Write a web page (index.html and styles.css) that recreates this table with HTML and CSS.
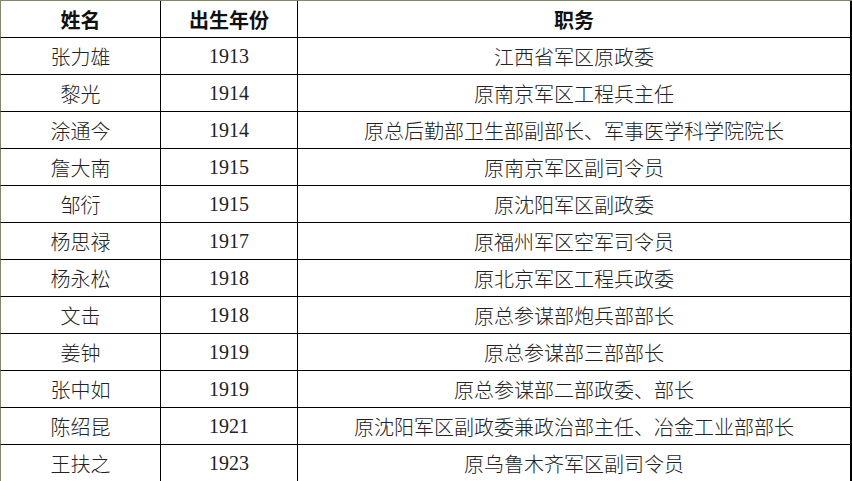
FILE: index.html
```html
<!DOCTYPE html>
<html lang="zh-CN">
<head>
<meta charset="utf-8">
<title>名单</title>
<link rel="stylesheet" href="styles.css">
</head>
<body>
<div class="table">
  <div class="cell head">姓名</div><div class="cell head">出生年份</div><div class="cell head wide">职务</div>
  <div class="cell">张力雄</div><div class="cell num">1913</div><div class="cell wide">江西省军区原政委</div>
  <div class="cell">黎光</div><div class="cell num">1914</div><div class="cell wide">原南京军区工程兵主任</div>
  <div class="cell">涂通今</div><div class="cell num">1914</div><div class="cell wide">原总后勤部卫生部副部长、军事医学科学院院长</div>
  <div class="cell">詹大南</div><div class="cell num">1915</div><div class="cell wide">原南京军区副司令员</div>
  <div class="cell">邹衍</div><div class="cell num">1915</div><div class="cell wide">原沈阳军区副政委</div>
  <div class="cell">杨思禄</div><div class="cell num">1917</div><div class="cell wide">原福州军区空军司令员</div>
  <div class="cell">杨永松</div><div class="cell num">1918</div><div class="cell wide">原北京军区工程兵政委</div>
  <div class="cell">文击</div><div class="cell num">1918</div><div class="cell wide">原总参谋部炮兵部部长</div>
  <div class="cell">姜钟</div><div class="cell num">1919</div><div class="cell wide">原总参谋部三部部长</div>
  <div class="cell">张中如</div><div class="cell num">1919</div><div class="cell wide">原总参谋部二部政委、部长</div>
  <div class="cell">陈绍昆</div><div class="cell num">1921</div><div class="cell wide">原沈阳军区副政委兼政治部主任、冶金工业部部长</div>
  <div class="cell">王扶之</div><div class="cell num">1923</div><div class="cell wide">原乌鲁木齐军区副司令员</div>
</div>
</body>
</html>
```

FILE: styles.css
```css
html, body {
  margin: 0;
  padding: 0;
  background: #fff;
}
body {
  width: 852px;
  height: 481px;
  overflow: hidden;
}
.table {
  display: grid;
  grid-template-columns: 161px 137px 554px;
  grid-auto-rows: 37px;
  border-top: 1px solid #85856b;
  font-family: "Liberation Serif", "Noto Sans CJK SC", serif;
  font-size: 20px;
  font-weight: 300;
  color: #222;
}
.cell {
  box-sizing: border-box;
  display: flex;
  align-items: center;
  justify-content: center;
  border-right: 1px solid #000;
  border-bottom: 1px solid #000;
  white-space: nowrap;
  padding-top: 1px;
}
.cell:nth-child(3n+1) {
  border-left: 1px solid #85856b;
}
.cell.wide {
  border-right: 2px solid #000;
}
.head {
  font-weight: bold;
  color: #111;
}
```
